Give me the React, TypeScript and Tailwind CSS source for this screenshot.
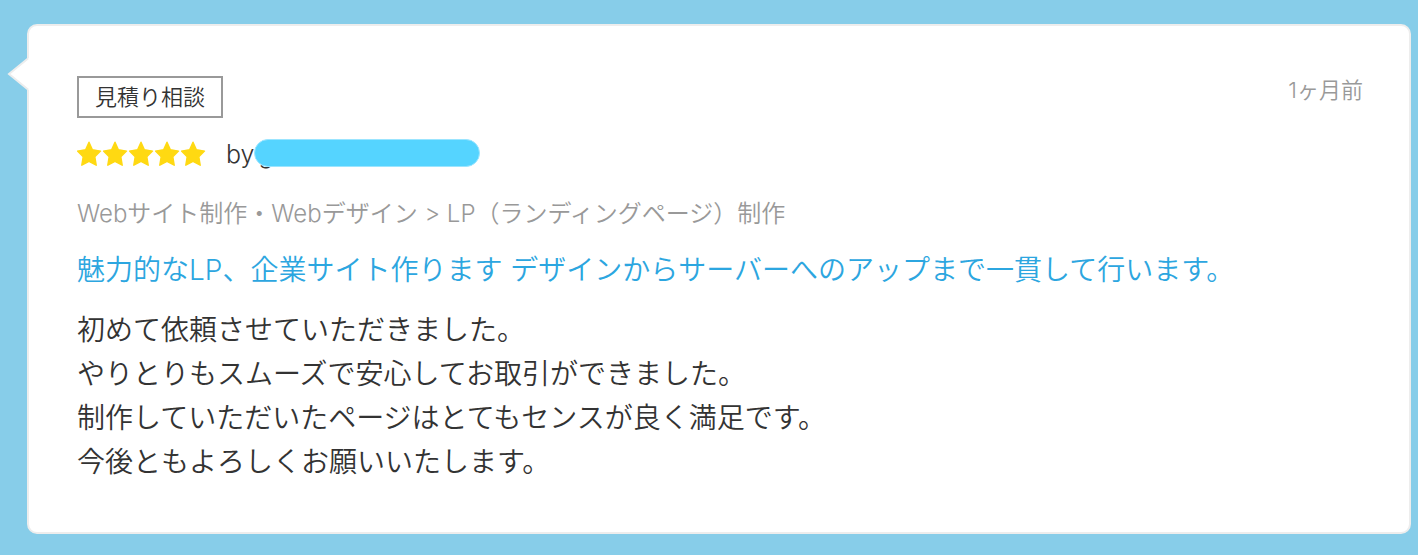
const reviewLines = [
  '初めて依頼させていただきました。',
  'やりとりもスムーズで安心してお取引ができました。',
  '制作していただいたページはとてもセンスが良く満足です。',
  '今後ともよろしくお願いいたします。',
];

function Star() {
  return (
    <svg viewBox="0 0 26 26" className="h-[26px] w-[26px] shrink-0" aria-hidden="true">
      <path
        d="M12 1.2 L15.4 8.8 L23.5 10.1 L17.8 15.7 L19.2 24.2 L12 20.4 L4.8 24.2 L6.2 15.7 L0.5 10.1 L8.6 8.8 Z"
        fill="#ffd912"
        stroke="#ffd912"
        strokeWidth="1.4"
        strokeLinejoin="round"
      />
    </svg>
  );
}

export default function App() {
  return (
    <main className="min-h-screen bg-[#87cde9] pt-6 pr-[7px] pb-[21px] pl-[27px] font-['Inter','Noto_Sans_CJK_JP',sans-serif] font-[350] text-[#333]">
      <article className="relative rounded-[10px] border-2 border-[#ededed] bg-white pt-[50px] pr-[46px] pb-[48px] pl-[48px]">
        <svg viewBox="0 0 22 34" className="absolute top-[31px] -left-[22px] h-[34px] w-[22px]" aria-hidden="true">
          <path d="M22 1 L2 17 L22 33 Z" fill="#fff" />
          <path d="M21 1.5 L2 17 L21 32.5" fill="none" stroke="#ededed" strokeWidth="2" />
        </svg>
        <header className="flex items-start justify-between">
          <span className="border-2 border-[#999] px-4 text-[22px] leading-[38px]">見積り相談</span>
          <time className="text-[22px] leading-7 text-[#999]">1ヶ月前</time>
        </header>
        <div className="mt-4 flex h-10 items-center">
          <div className="flex" role="img" aria-label="5">
            <Star />
            <Star />
            <Star />
            <Star />
            <Star />
          </div>
          <div className="relative ml-[19px] flex h-7 w-[254px] items-center text-[25px] leading-7 font-light">
            <span>by</span>
            <span className="ml-1">g</span>
            <span className="absolute right-0 bottom-px h-7 w-[226px] rounded-full border border-[#9be5ff] bg-[#55d4ff]" />
          </div>
        </div>
        <p className="mt-[22px] text-2xl leading-9 text-[#999]">
          Webサイト制作・Webデザイン &gt; LP（ランディングページ）制作
        </p>
        <h2 className="mt-4 text-[28px] leading-[44px]">
          <a href="#service" className="text-[#2ca6e0]">
            魅力的なLP、企業サイト作ります デザインからサーバーへのアップまで一貫して行います。
          </a>
        </h2>
        <div className="mt-4 text-[28px] leading-[44px]">
          {reviewLines.map((line) => (
            <p key={line}>{line}</p>
          ))}
        </div>
      </article>
    </main>
  );
}
